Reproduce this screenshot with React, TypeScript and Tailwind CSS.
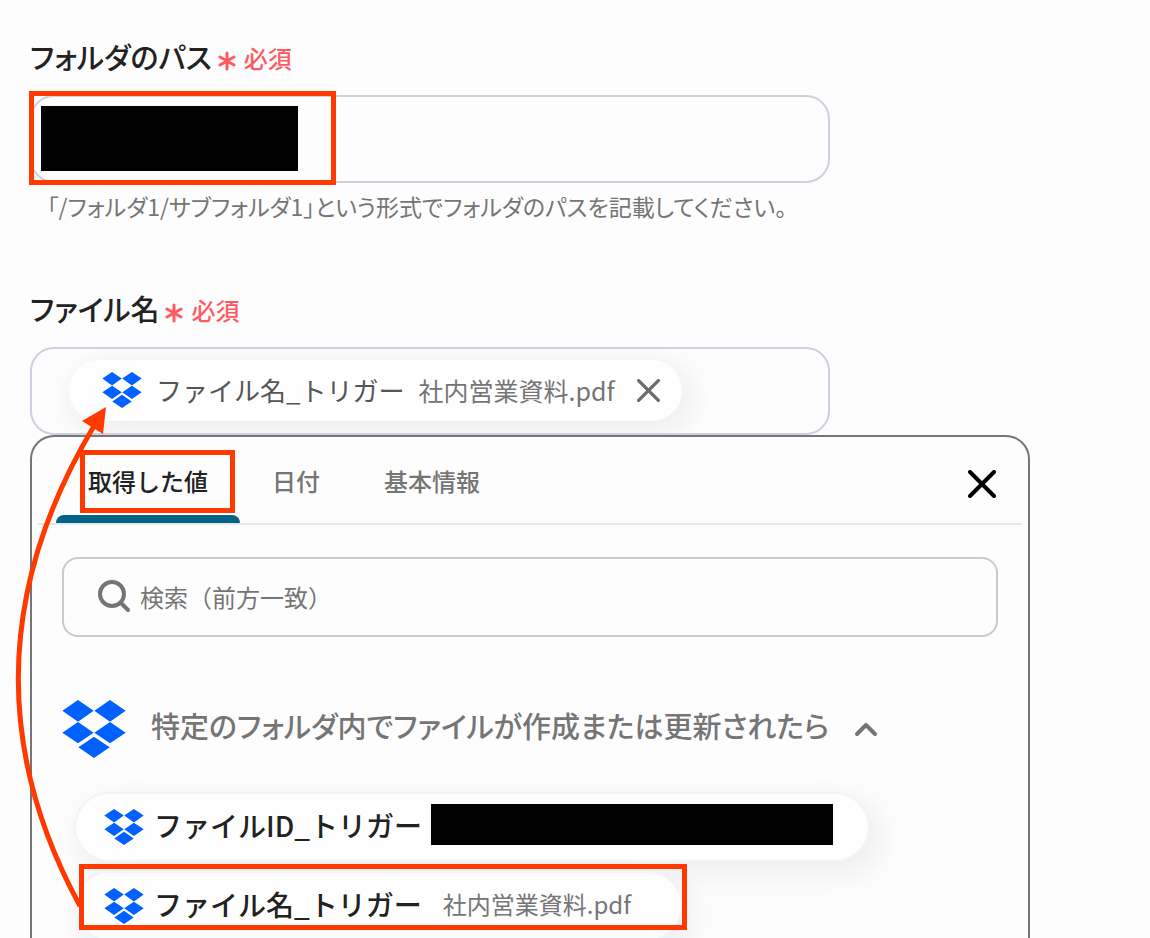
import type { ReactNode } from "react";
import { useState } from "react";

const tabs = ["取得した値", "日付", "基本情報"];

function DropboxIcon({ className }: { className: string }) {
  return (
    <svg viewBox="0 0 190 174" className={className} fill="#0061ff" aria-hidden="true">
      <path d="M0 32 47 0l47 32-47 33zM96 32l47-32 47 32-47 33zM0 98l47-32 47 32-47 32zM96 98l47-32 47 32-47 32zM48 142l47-32 47 32-47 32z" />
    </svg>
  );
}

function CloseIcon({ className }: { className: string }) {
  return (
    <svg
      viewBox="0 0 28 28"
      className={className}
      fill="none"
      stroke="currentColor"
      strokeWidth="4"
      strokeLinecap="round"
      aria-hidden="true"
    >
      <path d="M2 2l24 24M26 2L2 26" />
    </svg>
  );
}

function Required() {
  return (
    <span className="flex items-center gap-2 text-2xl leading-9 font-medium text-[#ff5a5f]">
      <svg viewBox="0 0 18 20" className="mt-[6px] h-5 w-[18px]" stroke="currentColor" strokeWidth="3" strokeLinecap="round" aria-hidden="true">
        <path d="M9 2v16M2 6l14 8M16 6L2 14" />
      </svg>
      必須
    </span>
  );
}

function FieldLabel({ htmlFor, children }: { htmlFor: string; children: ReactNode }) {
  return (
    <label id={`${htmlFor}-label`} htmlFor={htmlFor} className="flex items-center gap-[6px] text-[29px] leading-10 font-medium text-[#222]">
      <span className="mb-1 [font-feature-settings:'palt']">{children}</span>
      <Required />
    </label>
  );
}

// Red frame drawn around the part of the form being explained
function Highlight({ className }: { className: string }) {
  return <span className={`pointer-events-none absolute z-10 border-5 border-[#ff3900] ${className}`} />;
}

export default function App() {
  const [activeTab, setActiveTab] = useState(tabs[0]);

  return (
    <main className="relative flex h-screen flex-col overflow-hidden bg-[#fdfdfd] px-[30px] pt-9 font-['Noto_Sans_CJK_JP',sans-serif]">
      <section className="max-w-[800px]">
        <FieldLabel htmlFor="folder-path">フォルダのパス</FieldLabel>
        <div className="relative mt-[15px]">
          <input
            id="folder-path"
            type="text"
            className="block h-[88px] w-full rounded-3xl border-2 border-[#cdd1de] bg-transparent px-10 text-2xl outline-none"
          />
          <span className="absolute top-[11px] left-[11px] h-[65px] w-[257px] bg-black" />
          <Highlight className="-top-1 -left-px h-[94px] w-[307px]" />
        </div>
        <p className="mt-[7px] pl-[17px] text-[23px] leading-8 text-[#757575] [font-feature-settings:'palt']">
          「/フォルダ1/サブフォルダ1」という形式でフォルダのパスを記載してください。
        </p>
      </section>

      <section className="mt-[66px] max-w-[800px]">
        <FieldLabel htmlFor="file-name">ファイル名</FieldLabel>
        <div
          id="file-name"
          role="group"
          aria-labelledby="file-name-label"
          className="mt-[15px] flex h-[88px] items-center overflow-hidden rounded-3xl border-2 border-[#cdd1de] pb-[2px] pl-[37px]"
        >
          <span className="flex h-[61px] items-center rounded-full bg-[#fefefe] pr-[22px] pl-[33px] shadow-[6px_8px_28px_4px_rgba(60,30,70,0.07)]">
            <DropboxIcon className="h-9 w-10" />
            <span className="ml-[14px] text-[26px] leading-9 text-[#555]">ファイル名_トリガー</span>
            <span className="ml-[14px] text-[25px] leading-9 text-[#757575]">社内営業資料.pdf</span>
            <button type="button" aria-label="削除" className="ml-[22px] text-[#6b6b6b]">
              <CloseIcon className="size-[23px]" />
            </button>
          </span>
        </div>
      </section>

      <section className="flex max-w-[1000px] flex-1 flex-col rounded-t-3xl border-2 border-b-0 border-[#757575]">
        <div className="mx-[6px] flex h-[88px] items-stretch border-b-2 border-[#e6e6e6] pl-[18px]">
          <div role="tablist" className="flex">
            {tabs.map((tab) => (
              <button
                key={tab}
                type="button"
                role="tab"
                aria-selected={tab === activeTab}
                onClick={() => setActiveTab(tab)}
                className={`relative px-8 pt-[2px] text-2xl font-medium ${
                  tab === activeTab ? "text-[#222]" : "text-[#757575]"
                }`}
              >
                {tab}
                {tab === activeTab && <span className="absolute inset-x-0 bottom-0 h-2 rounded-t-lg bg-[#026287]" />}
                {tab === tabs[0] && <Highlight className="top-[13px] left-6 h-[63px] w-[155px]" />}
              </button>
            ))}
          </div>
          <button type="button" aria-label="閉じる" className="mt-2 mr-[26px] ml-auto text-black">
            <CloseIcon className="size-7" />
          </button>
        </div>

        <div className="px-[30px] pt-8">
          <div className="flex h-20 items-center gap-2 rounded-2xl border-2 border-[#cacaca] pb-[2px] pl-[34px]">
            <svg viewBox="0 0 34 34" className="size-[34px] text-[#757575]" fill="none" stroke="currentColor" strokeWidth="4" strokeLinecap="round" aria-hidden="true">
              <circle cx="14" cy="15" r="12" />
              <path d="M23 24l7 7" />
            </svg>
            <input
              type="text"
              aria-label="検索"
              placeholder="検索（前方一致）"
              className="h-full flex-1 bg-transparent text-2xl outline-none placeholder:text-[#757575]"
            />
          </div>

          <button type="button" aria-expanded="true" className="mt-[63px] flex items-center text-[29px] leading-10 font-medium text-[#757575]">
            <DropboxIcon className="h-[58px] w-16" />
            <span className="mb-2 ml-[25px] [font-feature-settings:'palt']">特定のフォルダ内でファイルが作成または更新されたら</span>
            <svg viewBox="0 0 24 16" className="ml-[25px] h-4 w-6" fill="none" stroke="currentColor" strokeWidth="4" strokeLinecap="round" strokeLinejoin="round" aria-hidden="true">
              <path d="M3 13l9-9 9 9" />
            </svg>
          </button>

          <ul className="mt-[34px] flex flex-col items-start gap-[9px] pl-3">
            <li>
              <button
                type="button"
                className="flex h-[70px] items-center rounded-full border-2 border-[#f4f3f5] bg-[#fefefe] pr-[35px] pl-7 shadow-[8px_10px_28px_2px_rgba(60,30,70,0.07)]"
              >
                <DropboxIcon className="h-9 w-10" />
                <span className="mb-1 ml-[10px] text-[28px] leading-10 font-medium text-[#222]">ファイルID_トリガー</span>
                <span className="mb-[5px] ml-[9px] h-[41px] w-[402px] bg-black" />
              </button>
            </li>
            <li className="relative">
              <button
                type="button"
                className="flex h-[70px] items-center rounded-full border-2 border-[#f4f3f5] bg-[#fefefe] pr-[50px] pl-7 shadow-[8px_10px_28px_2px_rgba(60,30,70,0.07)]"
              >
                <DropboxIcon className="h-9 w-10" />
                <span className="mb-1 ml-[10px] text-[28px] leading-10 font-medium text-[#222]">ファイル名_トリガー</span>
                <span className="mb-1 ml-[21px] text-2xl leading-9 text-[#757575]">社内営業資料.pdf</span>
              </button>
              <Highlight className="-top-[7px] left-[5px] h-[66px] w-[608px]" />
            </li>
          </ul>
        </div>
      </section>

      {/* Arrow from the picked value up to the chip in the field */}
      <svg viewBox="0 0 110 520" className="pointer-events-none absolute top-[400px] left-0 z-20 h-[520px] w-[110px]" aria-hidden="true">
        <path d="M80 506Q-50 267 94 26" fill="none" stroke="#ff3900" strokeWidth="5" />
        <path d="M106 7L82 21l21 13z" fill="#ff3900" />
      </svg>
    </main>
  );
}
